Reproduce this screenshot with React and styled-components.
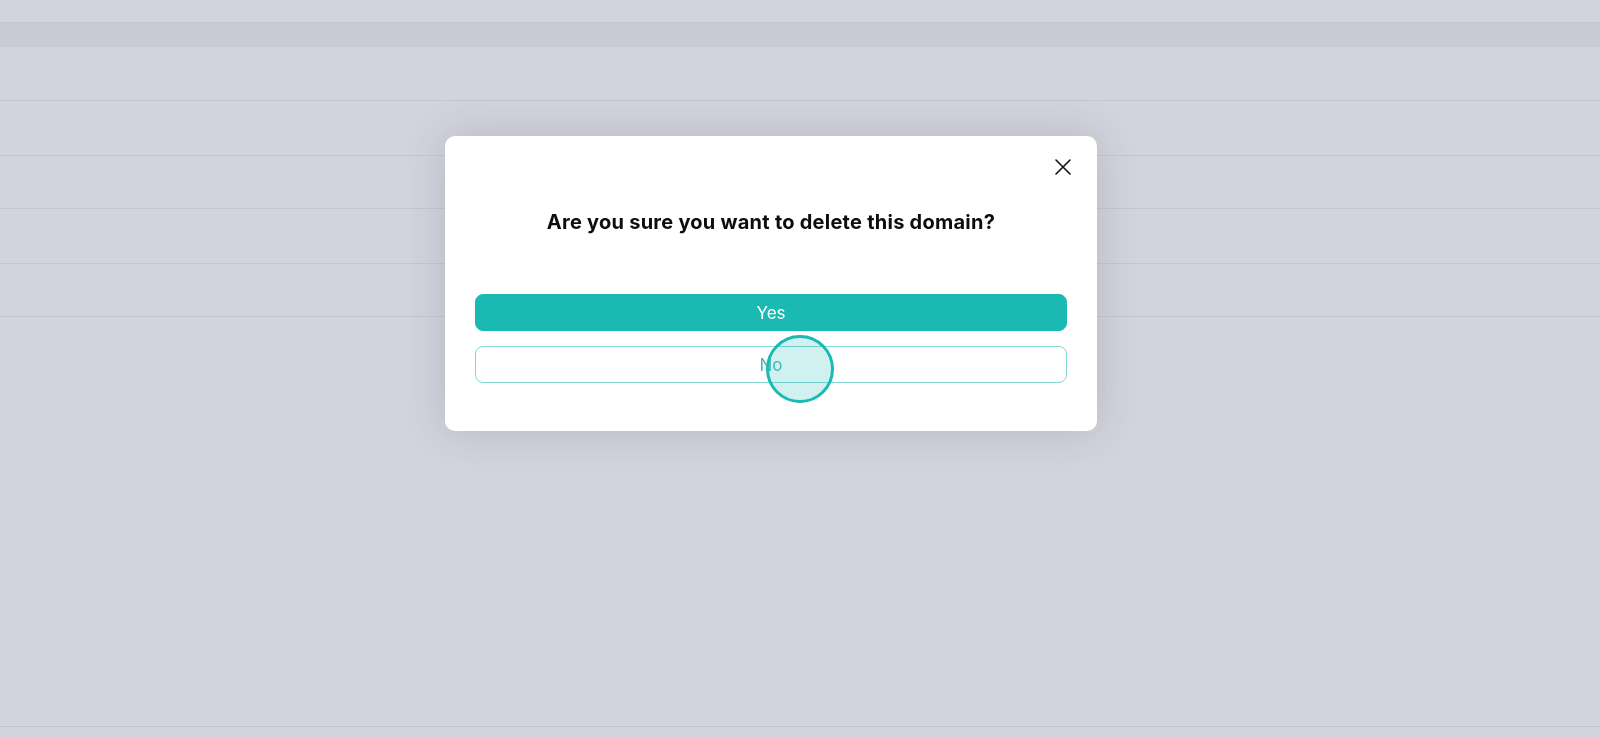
import styled, { createGlobalStyle } from "styled-components";

const GlobalStyle = createGlobalStyle`
  html, body {
    margin: 0;
    padding: 0;
    height: 100%;
  }
  body {
    font-family: Inter, "Noto Sans", sans-serif;
    background: #d3d3dd;
    overflow: hidden;
  }
`;

const TEAL = "#1abab3";

const rows = [55, 53, 55, 53];

export default function App() {
  return (
    <>
      <GlobalStyle />
      <Page>
        <TopStrip />
        <HeaderRow />
        <Spacer />
        {rows.map((h, i) => (
          <TableRow key={i} $height={h} />
        ))}
        <Filler />
        <FooterLine />
      </Page>

      <Overlay>
        <Modal>
          <CloseRow>
            <CloseButton aria-label="Close">
              <svg width="16" height="16" viewBox="0 0 16 16" fill="none">
                <path
                  d="M1 1L15 15M15 1L1 15"
                  stroke="#111"
                  strokeWidth="1.6"
                  strokeLinecap="round"
                />
              </svg>
            </CloseButton>
          </CloseRow>
          <Title>Are you sure you want to delete this domain?</Title>
          <Actions>
            <ActionButton $primary>Yes</ActionButton>
            <ActionButton>No</ActionButton>
          </Actions>
        </Modal>
        <ClickMarker />
      </Overlay>
    </>
  );
}

const Page = styled.div`
  height: 100vh;
  display: flex;
  flex-direction: column;
  background: #d3d3dd;
`;

const TopStrip = styled.div`
  height: 22px;
  border-bottom: 1px solid #c4c4d0;
`;

const HeaderRow = styled.div`
  height: 24px;
  background: #cacad5;
`;

const Spacer = styled.div`
  height: 53px;
  border-bottom: 1px solid #c6c6d2;
`;

const TableRow = styled.div`
  height: ${({ $height }) => $height - 1}px;
  border-bottom: 1px solid #c6c6d2;
`;

const Filler = styled.div`
  flex: 1;
`;

const FooterLine = styled.div`
  height: 10px;
  border-top: 1px solid #c4c4d0;
`;

const Overlay = styled.div`
  position: fixed;
  inset: 0;
  display: flex;
  align-items: flex-start;
  padding: 136px 0 0 445px;
`;

const Modal = styled.div`
  width: 652px;
  box-sizing: border-box;
  background: #ffffff;
  border-radius: 10px;
  padding: 23px 30px 48px;
  box-shadow: 0 0 40px rgba(60, 60, 80, 0.18);
  display: flex;
  flex-direction: column;
`;

const CloseRow = styled.div`
  display: flex;
  justify-content: flex-end;
  margin-right: -4px;
  height: 15px;
`;

const CloseButton = styled.button`
  border: none;
  background: none;
  padding: 0;
  width: 16px;
  height: 16px;
  display: flex;
  cursor: pointer;
`;

const Title = styled.h2`
  margin: 33px 0 0;
  text-align: center;
  font-family: Inter, "Noto Sans", sans-serif;
  font-size: 20px;
  line-height: 30px;
  font-weight: 700;
  letter-spacing: 0.25px;
  color: #0d0d0d;
`;

const Actions = styled.div`
  margin-top: 57px;
  display: flex;
  flex-direction: column;
  gap: 15px;
`;

const ActionButton = styled.button`
  height: 37px;
  width: 100%;
  border-radius: 8px;
  font-family: Inter, "Noto Sans", sans-serif;
  font-size: 17px;
  font-weight: 400;
  cursor: pointer;
  border: 1px solid ${({ $primary }) => ($primary ? TEAL : "#80d7d3")};
  background: ${({ $primary }) => ($primary ? TEAL : "#ffffff")};
  color: ${({ $primary }) => ($primary ? "#ffffff" : "#4ab8b2")};
`;

const ClickMarker = styled.div`
  position: absolute;
  left: 766px;
  top: 335px;
  width: 68px;
  height: 68px;
  box-sizing: border-box;
  border-radius: 50%;
  border: 3.5px solid ${TEAL};
  background: rgba(26, 186, 179, 0.2);
  pointer-events: none;
`;
